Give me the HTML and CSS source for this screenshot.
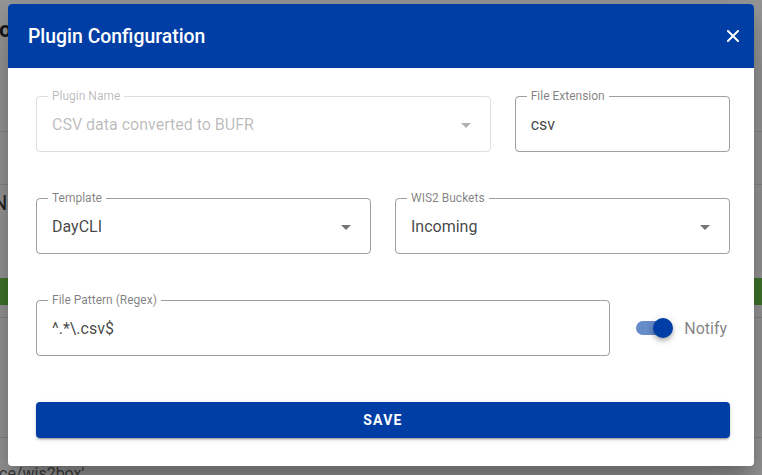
FILE: index.html
```html
<!DOCTYPE html>
<html lang="en">
<head>
<meta charset="utf-8">
<title>Plugin Configuration</title>
<link rel="stylesheet" href="styles.css">
</head>
<body>
<div class="bg-page">
  <div class="bg-block bg-head"><span class="bg-title">o</span></div>
  <div class="bg-block bg-b2"></div>
  <div class="bg-block bg-b3"><span class="bg-n">N</span></div>
  <div class="bg-green"></div>
  <div class="bg-block bg-b4"></div>
  <div class="bg-block bg-b5"></div>
  <div class="bg-foot">ce/wis2box'</div>
</div>
<div class="overlay"></div>

<div class="dialog">
  <div class="dialog-header">
    <span class="dialog-title">Plugin Configuration</span>
    <button class="close-btn" aria-label="Close">
      <svg width="12" height="12" viewBox="0 0 12 12"><path d="M1 1L11 11M11 1L1 11" stroke="#fff" stroke-width="2" stroke-linecap="square"/></svg>
    </button>
  </div>
  <div class="dialog-body">
    <div class="field disabled span-8">
      <span class="field-label">Plugin Name</span>
      <span class="field-value">CSV data converted to BUFR</span>
      <svg class="arrow" width="24" height="24" viewBox="0 0 24 24"><path d="M7 10L12 15L17 10H7Z"/></svg>
    </div>
    <div class="field span-4">
      <span class="field-label">File Extension</span>
      <span class="field-value">csv</span>
    </div>
    <div class="field span-6">
      <span class="field-label">Template</span>
      <span class="field-value">DayCLI</span>
      <svg class="arrow" width="24" height="24" viewBox="0 0 24 24"><path d="M7 10L12 15L17 10H7Z"/></svg>
    </div>
    <div class="field span-6">
      <span class="field-label">WIS2 Buckets</span>
      <span class="field-value">Incoming</span>
      <svg class="arrow" width="24" height="24" viewBox="0 0 24 24"><path d="M7 10L12 15L17 10H7Z"/></svg>
    </div>
    <div class="field span-10">
      <span class="field-label">File Pattern (Regex)</span>
      <span class="field-value">^.*\.csv$</span>
    </div>
    <div class="switch-cell span-2">
      <span class="switch"><span class="switch-track"></span><span class="switch-thumb"></span></span>
      <span class="switch-label">Notify</span>
    </div>
    <button class="save-btn span-12">SAVE</button>
  </div>
</div>
</body>
</html>
```
FILE: styles.css
```css
* { box-sizing: border-box; }
html, body { margin: 0; padding: 0; }
body {
  width: 762px;
  height: 475px;
  overflow: hidden;
  font-family: Roboto, "Liberation Sans", sans-serif;
  background: #fff;
  position: relative;
}

/* background page */
.bg-page {
  display: flex;
  flex-direction: column;
  height: 475px;
  overflow: hidden;
}
.bg-page > * { flex: none; }
.bg-block { border-bottom: 1px solid #e0e0e0; }
.bg-head { height: 132px; padding-top: 17px; }
.bg-title {
  display: block;
  margin-left: -1px;
  font-size: 22px;
  font-weight: 700;
  color: #111;
}
.bg-b2 { height: 53px; }
.bg-b3 { height: 93px; padding-top: 6px; border-bottom: none; }
.bg-n { display: block; margin-left: -7px; font-size: 20px; color: #222; }
.bg-green { height: 27px; background: #5fbe3a; }
.bg-b4 { height: 13px; }
.bg-b5 { height: 120px; }
.bg-foot {
  margin-left: -1px;
  padding-top: 26px;
  font-size: 16px;
  color: #555;
}

.overlay {
  position: absolute;
  inset: 0;
  background: rgba(33, 33, 33, 0.46);
}

/* dialog */
.dialog {
  position: absolute;
  left: 8px;
  top: 4px;
  width: 746px;
  height: 462px;
  background: #fff;
  border-radius: 4px;
  overflow: hidden;
  box-shadow: 0 11px 15px -7px rgba(0,0,0,.2), 0 24px 38px 3px rgba(0,0,0,.14), 0 9px 46px 8px rgba(0,0,0,.12);
}
.dialog-header {
  height: 64px;
  background: #003da5;
  display: flex;
  align-items: center;
  justify-content: space-between;
  padding: 0 9px 0 20px;
}
.dialog-title {
  color: #fff;
  font-size: 19.4px;
  font-weight: 500;
}
.close-btn {
  width: 24px;
  height: 24px;
  border: 0;
  padding: 0;
  background: transparent;
  display: flex;
  align-items: center;
  justify-content: center;
}

.dialog-body {
  padding: 28px 24px 28px 28px;
  display: grid;
  grid-template-columns: repeat(12, 1fr);
  column-gap: 24px;
  row-gap: 46px;
}
.span-2 { grid-column: span 2; }
.span-4 { grid-column: span 4; }
.span-6 { grid-column: span 6; }
.span-8 { grid-column: span 8; }
.span-10 { grid-column: span 10; }
.span-12 { grid-column: span 12; }

.field {
  position: relative;
  height: 56px;
  border: 1px solid rgba(0,0,0,0.38);
  border-radius: 4px;
  display: flex;
  align-items: center;
  padding: 0 12px 0 15px;
}
.field-label {
  position: absolute;
  left: 11px;
  top: -8px;
  padding: 0 4px;
  background: #fff;
  font-size: 12px;
  line-height: 14px;
  color: rgba(0,0,0,0.5);
}
.field-value {
  flex: 1;
  font-size: 16px;
  color: rgba(0,0,0,0.74);
  padding-top: 1px;
}
.arrow { fill: rgba(0,0,0,0.54); flex: none; margin-top: 2px; }
.field.disabled { border-color: rgba(0,0,0,0.13); }
.field.disabled .field-label { color: rgba(0,0,0,0.28); }
.field.disabled .field-value { color: rgba(0,0,0,0.28); }
.field.disabled .arrow { fill: rgba(0,0,0,0.3); }

.switch-cell {
  display: flex;
  align-items: center;
  padding-left: 2px;
  height: 56px;
}
.switch {
  position: relative;
  width: 38px;
  height: 20px;
  margin-right: 10px;
  flex: none;
}
.switch-track {
  position: absolute;
  left: 0;
  top: 3px;
  width: 36px;
  height: 14px;
  border-radius: 8px;
  background: #003da5;
  opacity: 0.6;
}
.switch-thumb {
  position: absolute;
  left: 17px;
  top: 0;
  width: 20px;
  height: 20px;
  border-radius: 50%;
  background: #003da5;
  box-shadow: 0 2px 4px -1px rgba(0,0,0,.2), 0 4px 5px 0 rgba(0,0,0,.14), 0 1px 10px 0 rgba(0,0,0,.12);
}
.switch-label {
  font-size: 16px;
  color: rgba(0,0,0,0.5);
}

.save-btn {
  height: 36px;
  border: 0;
  border-radius: 4px;
  background: #003da5;
  color: #fff;
  font-family: Roboto, "Liberation Sans", sans-serif;
  font-size: 14px;
  font-weight: 700;
  letter-spacing: 1.25px;
  box-shadow: 0 3px 1px -2px rgba(0,0,0,.2), 0 2px 2px 0 rgba(0,0,0,.14), 0 1px 5px 0 rgba(0,0,0,.12);
}
```
